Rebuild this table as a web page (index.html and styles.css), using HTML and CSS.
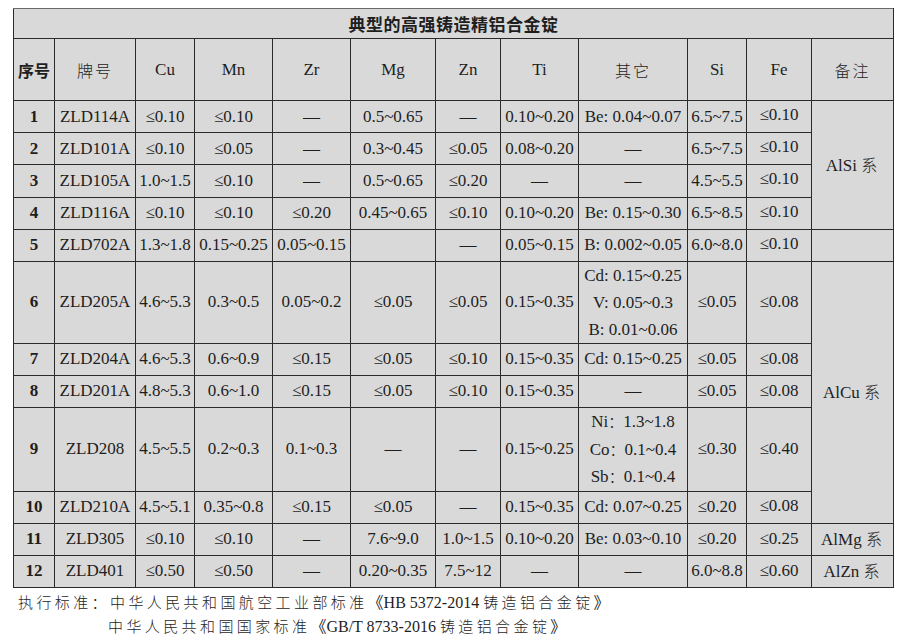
FILE: index.html
```html
<!DOCTYPE html>
<html lang="zh-CN">
<head>
<meta charset="utf-8">
<title>典型的高强铸造精铝合金锭</title>
<link rel="stylesheet" href="styles.css">
</head>
<body>
<div class="page">
<table class="alloy">
<colgroup>
<col class="c1"><col class="c2"><col class="c3"><col class="c4"><col class="c5"><col class="c6"><col class="c7"><col class="c8"><col class="c9"><col class="c10"><col class="c11"><col class="c12">
</colgroup>
<tr class="r-title"><td colspan="12" class="title">典型的高强铸造精铝合金锭</td></tr>
<tr class="r-head">
<td class="cjk bold">序号</td><td class="cjk">牌号</td><td>Cu</td><td>Mn</td><td>Zr</td><td>Mg</td><td>Zn</td><td>Ti</td><td class="cjk">其它</td><td>Si</td><td>Fe</td><td class="cjk">备注</td>
</tr>
<tr class="r-a"><td class="bold">1</td><td>ZLD114A</td><td>≤0.10</td><td>≤0.10</td><td>—</td><td>0.5~0.65</td><td>—</td><td>0.10~0.20</td><td>Be: 0.04~0.07</td><td>6.5~7.5</td><td class="up">≤0.10</td><td rowspan="4">AlSi <span class="cjk">系</span></td></tr>
<tr class="r-a"><td class="bold">2</td><td>ZLD101A</td><td>≤0.10</td><td>≤0.05</td><td>—</td><td>0.3~0.45</td><td>≤0.05</td><td>0.08~0.20</td><td>—</td><td>6.5~7.5</td><td class="up">≤0.10</td></tr>
<tr class="r-a"><td class="bold">3</td><td>ZLD105A</td><td>1.0~1.5</td><td>≤0.10</td><td>—</td><td>0.5~0.65</td><td>≤0.20</td><td>—</td><td>—</td><td>4.5~5.5</td><td class="up">≤0.10</td></tr>
<tr class="r-a"><td class="bold">4</td><td>ZLD116A</td><td>≤0.10</td><td>≤0.10</td><td>≤0.20</td><td>0.45~0.65</td><td>≤0.10</td><td>0.10~0.20</td><td>Be: 0.15~0.30</td><td>6.5~8.5</td><td class="up">≤0.10</td></tr>
<tr class="r-a"><td class="bold">5</td><td>ZLD702A</td><td>1.3~1.8</td><td>0.15~0.25</td><td>0.05~0.15</td><td></td><td>—</td><td>0.05~0.15</td><td>B: 0.002~0.05</td><td>6.0~8.0</td><td class="up">≤0.10</td><td></td></tr>
<tr class="r-6"><td class="bold">6</td><td>ZLD205A</td><td>4.6~5.3</td><td>0.3~0.5</td><td>0.05~0.2</td><td>≤0.05</td><td>≤0.05</td><td>0.15~0.35</td><td class="multi">Cd: 0.15~0.25<br>V: 0.05~0.3<br>B: 0.01~0.06</td><td>≤0.05</td><td>≤0.08</td><td rowspan="5">AlCu <span class="cjk">系</span></td></tr>
<tr class="r-b"><td class="bold">7</td><td>ZLD204A</td><td>4.6~5.3</td><td>0.6~0.9</td><td>≤0.15</td><td>≤0.05</td><td>≤0.10</td><td>0.15~0.35</td><td>Cd: 0.15~0.25</td><td>≤0.05</td><td>≤0.08</td></tr>
<tr class="r-b"><td class="bold">8</td><td>ZLD201A</td><td>4.8~5.3</td><td>0.6~1.0</td><td>≤0.15</td><td>≤0.05</td><td>≤0.10</td><td>0.15~0.35</td><td>—</td><td>≤0.05</td><td>≤0.08</td></tr>
<tr class="r-9"><td class="bold">9</td><td>ZLD208</td><td>4.5~5.5</td><td>0.2~0.3</td><td>0.1~0.3</td><td>—</td><td>—</td><td>0.15~0.25</td><td class="multi multi9">Ni<span class="cjk">：</span>1.3~1.8<br>Co<span class="cjk">：</span>0.1~0.4<br>Sb<span class="cjk">：</span>0.1~0.4</td><td>≤0.30</td><td>≤0.40</td></tr>
<tr class="r-b"><td class="bold">10</td><td>ZLD210A</td><td>4.5~5.1</td><td>0.35~0.8</td><td>≤0.15</td><td>≤0.05</td><td>—</td><td>0.15~0.35</td><td>Cd: 0.07~0.25</td><td>≤0.20</td><td class="up">≤0.08</td></tr>
<tr class="r-b"><td class="bold">11</td><td>ZLD305</td><td>≤0.10</td><td>≤0.10</td><td>—</td><td>7.6~9.0</td><td>1.0~1.5</td><td>0.10~0.20</td><td>Be: 0.03~0.10</td><td>≤0.20</td><td>≤0.25</td><td>AlMg <span class="cjk">系</span></td></tr>
<tr class="r-b"><td class="bold">12</td><td>ZLD401</td><td>≤0.50</td><td>≤0.50</td><td>—</td><td>0.20~0.35</td><td>7.5~12</td><td>—</td><td>—</td><td>6.0~8.8</td><td>≤0.60</td><td>AlZn <span class="cjk">系</span></td></tr>
</table>
<div class="notes">
<p class="note"><span class="cjk sp">执行标准：中华人民共和国航空工业部标准</span>《HB 5372-2014 <span class="cjk sp">铸造铝合金锭</span>》</p>
<p class="note note2"><span class="cjk sp">中华人民共和国国家标准</span>《GB/T 8733-2016 <span class="cjk sp">铸造铝合金锭</span>》</p>
</div>
</div>
</body>
</html>
```
FILE: styles.css
```css
html, body {
  margin: 0;
  padding: 0;
  background: #ffffff;
}

.page {
  padding: 8px 0 0 13px;
  font-family: "Liberation Serif", "Noto Sans CJK SC", serif;
  color: #1e1e1e;
}

.alloy {
  border-collapse: collapse;
  table-layout: fixed;
  width: 881px;
  background: #d9d9d9;
  font-size: 17px;
}

.alloy td {
  border: 1px solid #2a2a2a;
  padding: 0;
  text-align: center;
  vertical-align: middle;
  white-space: nowrap;
  line-height: 20px;
}

.alloy tr.r-title td {
  border-top-color: #6a6a6a;
}

.c1 { width: 41px; }
.c2 { width: 81px; }
.c3 { width: 59px; }
.c4 { width: 78px; }
.c5 { width: 78px; }
.c6 { width: 85px; }
.c7 { width: 65px; }
.c8 { width: 78px; }
.c9 { width: 109px; }
.c10 { width: 59px; }
.c11 { width: 65px; }
.c12 { width: 82px; }

.r-title { height: 30px; }
.r-head { height: 62px; }
.r-a { height: 32.2px; }
.r-b { height: 32px; }
.r-6 { height: 82px; }
.r-9 { height: 84px; }

.title {
  font-family: "Noto Sans CJK SC", sans-serif;
  font-weight: 700;
  font-size: 17px;
  letter-spacing: 0.5px;
}

.cjk {
  font-family: "Noto Sans CJK SC", sans-serif;
  font-weight: 300;
  font-size: 16px;
  letter-spacing: 2px;
}

.bold {
  font-weight: 700;
}

.cjk.bold {
  font-weight: 700;
  letter-spacing: 0;
}

.up {
  padding-bottom: 3px !important;
}

.multi {
  line-height: 27px !important;
}

.multi9 {
  line-height: 26.5px !important;
}

.multi9 .cjk {
  letter-spacing: 0;
  font-size: 15px;
}

.notes {
  padding: 1px 0 0 5px;
  font-size: 16px;
}

.note {
  margin: 0;
  line-height: 25px;
  white-space: nowrap;
}

.note2 {
  padding-left: 90px;
  line-height: 22px;
}

.note .sp {
  font-size: 15px;
  letter-spacing: 3.4px;
}
```
